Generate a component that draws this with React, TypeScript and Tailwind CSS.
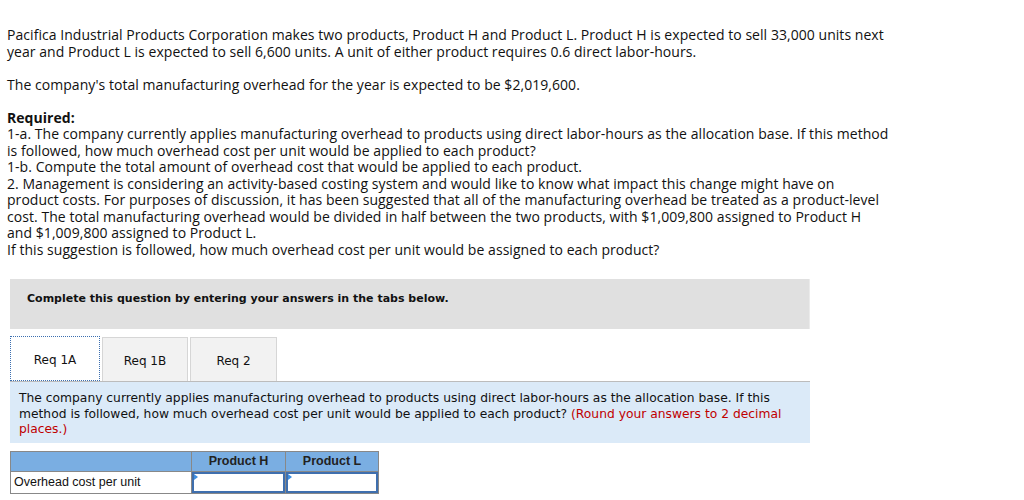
import React from 'react';

const body = { fontFamily: '"Open Sans", "Liberation Sans", sans-serif' };
const verdana = { fontFamily: '"DejaVu Sans", Verdana, sans-serif' };
const arial = { fontFamily: '"Liberation Sans", Arial, sans-serif' };

function AnswerCell() {
  return (
    <td className="border border-[#888] p-0 h-[22px]">
      <div className="relative h-full border-2 border-[#3f6fae] bg-white">
        <span className="absolute left-0 top-0 h-0 w-0 border-y-[3px] border-l-[4px] border-y-transparent border-l-[#3f8fe0]" />
      </div>
    </td>
  );
}

export default function App() {
  return (
    <div className="min-h-[500px] bg-white text-[#111] pt-[27px]">
      <div className="pl-[7px] text-[14px] leading-[16.5px] tracking-[0.05px] whitespace-nowrap" style={body}>
        <p>
          Pacifica Industrial Products Corporation makes two products, Product H and Product L. Product H is expected to sell 33,000 units next
          <br />
          year and Product L is expected to sell 6,600 units. A unit of either product requires 0.6 direct labor-hours.
        </p>
        <p className="mt-[17px]">The company's total manufacturing overhead for the year is expected to be $2,019,600.</p>
        <p className="mt-[16px] font-bold">Required:</p>
        <p>
          1-a. The company currently applies manufacturing overhead to products using direct labor-hours as the allocation base. If this method
          <br />
          is followed, how much overhead cost per unit would be applied to each product?
        </p>
        <p>1-b. Compute the total amount of overhead cost that would be applied to each product.</p>
        <p>
          2. Management is considering an activity-based costing system and would like to know what impact this change might have on
          <br />
          product costs. For purposes of discussion, it has been suggested that all of the manufacturing overhead be treated as a product-level
          <br />
          cost. The total manufacturing overhead would be divided in half between the two products, with $1,009,800 assigned to Product H
          <br />
          and $1,009,800 assigned to Product L.
        </p>
        <p>If this suggestion is followed, how much overhead cost per unit would be assigned to each product?</p>
      </div>

      <div className="ml-[10px] w-[800px] mt-[21px]" style={verdana}>
        <div className="h-[50px] bg-[#e0e0e0] border-r border-[#ebebeb] pl-[17px] pt-[13px] text-[11px] leading-[14px] font-bold">
          Complete this question by entering your answers in the tabs below.
        </div>

        <div className="mt-[7px] flex items-end gap-[2px] text-[12px]">
          <div className="h-[45px] w-[90px] flex items-center justify-center pt-[2px] bg-white border border-dotted border-[#3b6fb0]">
            Req 1A
          </div>
          <div className="h-[44px] w-[86px] flex items-center justify-center pt-[2px] bg-[#f2f2f2] border border-[#d6d6d6] border-b-0">
            Req 1B
          </div>
          <div className="h-[44px] w-[87px] flex items-center justify-center pt-[2px] bg-[#f2f2f2] border border-[#d6d6d6] border-b-0">
            Req 2
          </div>
        </div>

        <div className="border-t border-[#bcbcbc] bg-[#dbeaf8] px-[9px] pt-[9px] h-[62px] text-[12.3px] leading-[15.5px] whitespace-nowrap">
          The company currently applies manufacturing overhead to products using direct labor-hours as the allocation base. If this
          <br />
          method is followed, how much overhead cost per unit would be applied to each product?{' '}
          <span className="text-[#c00000]">(Round your answers to 2 decimal</span>
          <br />
          <span className="text-[#c00000]">places.)</span>
        </div>
      </div>

      <table className="ml-[10px] mt-[8px] border-collapse text-[12.5px]" style={arial}>
        <thead>
          <tr className="bg-[#7aaee2] h-[20px]">
            <th className="border border-[#888] w-[181px]"></th>
            <th className="border border-[#888] w-[94px] font-bold text-[#222]">Product H</th>
            <th className="border border-[#888] w-[93px] font-bold text-[#222]">Product L</th>
          </tr>
        </thead>
        <tbody>
          <tr>
            <td className="border border-[#888] px-[3px] h-[22px] text-[#111]">Overhead cost per unit</td>
            <AnswerCell />
            <AnswerCell />
          </tr>
        </tbody>
      </table>
    </div>
  );
}
